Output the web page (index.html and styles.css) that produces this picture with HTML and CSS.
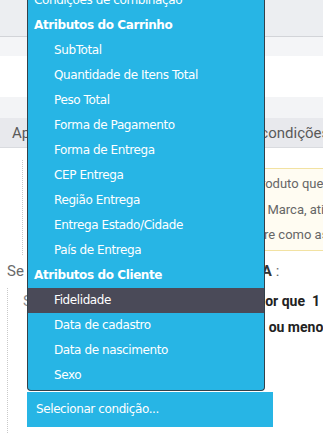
FILE: index.html
```html
<!DOCTYPE html>
<html lang="pt-BR">
<head>
<meta charset="utf-8">
<title>Condições</title>
<link rel="stylesheet" href="styles.css">
</head>
<body>
<div class="topbar"></div>
<div class="subbar"></div>
<div class="blank"></div>
<div class="strip"></div>
<div class="tabs">
  <div class="tab tab-first">Aplicar desconto</div>
  <div class="tab">Editar condições</div>
</div>
<div class="content">
  <div class="notice-wrap">
    <div class="notice">
      <div class="nline">Para aplicar a promoção apenas ao produto que você escolher</div>
      <div class="nline">Para filtrar o produto por Categoria ou Marca, ative a opção abaixo</div>
      <div class="nline">Depois, escolha suas regras e configure como as condições serão aplicadas</div>
    </div>
  </div>
  <div class="rule-title">Se <b>TODAS</b> as normas são <b>VERDADEIRA</b> :</div>
  <div class="cond-box">
    <div class="cond-row"><span class="lbl">SubTotal do Carrinho</span> <b>for igual ou maior que</b>&nbsp; <b>1</b></div>
    <div class="cond-row cond-row-cont"><b>e o Peso Total for de 500 gramas ou menos</b></div>
    <button class="select-btn" type="button">Selecionar condição...</button>
  </div>
</div>

<ul class="menu">
  <li class="item top">Condições de combinação</li>
  <li class="group">Atributos do Carrinho</li>
  <li class="item">SubTotal</li>
  <li class="item">Quantidade de Itens Total</li>
  <li class="item">Peso Total</li>
  <li class="item">Forma de Pagamento</li>
  <li class="item">Forma de Entrega</li>
  <li class="item">CEP Entrega</li>
  <li class="item">Região Entrega</li>
  <li class="item">Entrega Estado/Cidade</li>
  <li class="item">País de Entrega</li>
  <li class="group">Atributos do Cliente</li>
  <li class="item active">Fidelidade</li>
  <li class="item">Data de cadastro</li>
  <li class="item">Data de nascimento</li>
  <li class="item">Sexo</li>
</ul>
</body>
</html>
```
FILE: styles.css
```css
html, body {
  margin: 0;
  padding: 0;
}
body {
  width: 323px;
  height: 434px;
  overflow: hidden;
  position: relative;
  background: #ffffff;
  font-family: Roboto, "Liberation Sans", sans-serif;
}
.topbar {
  height: 36px;
  background: #eceef1;
  border-bottom: 1px solid #d2d4d8;
}
.subbar {
  height: 19px;
  background: #f4f5f7;
}
.blank {
  height: 41px;
  background: #ffffff;
}
.strip {
  height: 21px;
  background: #f3f4f6;
}
.tabs {
  height: 29px;
  background: #e8e9ed;
  border-bottom: 1px solid #d9dbdf;
  display: flex;
  align-items: center;
  white-space: nowrap;
  font-size: 15px;
  color: #5a5a5a;
}
.tab-first {
  flex: 0 0 auto;
  width: 206px;
  padding-left: 12px;
}
.content {
  padding-top: 12px;
}
.notice-wrap {
  margin-left: 22px;
  border-left: 1px dotted #c9c9c9;
  padding: 8px 0 4px 12px;
}
.notice {
  border: 1px solid #f2e2a2;
  border-right: none;
  background: #fffcf2;
  padding: 2px 0 2px 10px;
  white-space: nowrap;
  overflow: hidden;
  font-size: 13px;
  color: #666666;
}
.nline {
  line-height: 25.5px;
}
.rule-title {
  padding: 6px 0 0 7px;
  line-height: 20px;
  font-size: 15px;
  color: #6a6a6a;
  white-space: nowrap;
}
.rule-title b {
  color: #333;
}
.cond-box {
  margin: 7px 0 0 7px;
  border-left: 1px dotted #c9c9c9;
  padding: 0 0 8px 0;
}
.cond-row {
  padding-left: 15px;
  line-height: 26px;
  font-size: 14px;
  white-space: nowrap;
  color: #222;
}
.cond-row-cont {
  padding-left: 50px;
}
.cond-row .lbl {
  color: #8a8a8a;
  font-size: 15px;
}
.select-btn {
  display: block;
  margin: 52px 0 0 19px;
  width: 246px;
  height: 35px;
  border: none;
  background: #27b5e5;
  color: #ffffff;
  text-align: left;
  padding: 0 0 0 9px;
  font-family: "DejaVu Sans", sans-serif;
  font-size: 12px;
  letter-spacing: -0.4px;
}
.menu {
  position: absolute;
  left: 27px;
  top: -12px;
  width: 236px;
  margin: 0;
  padding: 0 0 2px 0;
  list-style: none;
  background: #27b5e5;
  border: 1px solid #34414a;
  border-top: none;
  border-radius: 0 0 4px 4px;
  font-family: "DejaVu Sans", sans-serif;
  font-size: 12px;
  letter-spacing: -0.4px;
  color: #ffffff;
}
.menu li {
  height: 25px;
  line-height: 25px;
  white-space: nowrap;
}
.menu .group {
  padding-left: 6px;
  font-weight: bold;
}
.menu .item {
  padding-left: 26px;
}
.menu .item.top {
  padding-left: 6px;
}
.menu .active {
  background: #4a4a58;
}
```
